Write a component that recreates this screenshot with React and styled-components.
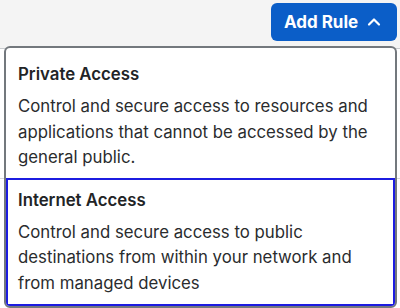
import React from "react";
import styled, { createGlobalStyle } from "styled-components";
import { ChevronUp } from "lucide-react";

const GlobalStyle = createGlobalStyle`
  * { box-sizing: border-box; }
  html, body { margin: 0; padding: 0; background: #ffffff; }
  body {
    font-family: Inter, "Noto Sans", sans-serif;
    color: #222426;
  }
`;

const options = [
  {
    title: "Private Access",
    description:
      "Control and secure access to resources and applications that cannot be accessed by the general public.",
  },
  {
    title: "Internet Access",
    description:
      "Control and secure access to public destinations from within your network and from managed devices",
    focused: true,
  },
];

const App = () => {
  return (
    <Page>
      <GlobalStyle />
      <Toolbar>
        <AddButton type="button">
          Add Rule
          <ChevronUp size={20} strokeWidth={2.6} />
        </AddButton>
      </Toolbar>
      <Row />
      <Row />
      <Menu role="menu">
        {options.map((option) => (
          <MenuItem key={option.title} focused={option.focused} role="menuitem">
            <ItemTitle>{option.title}</ItemTitle>
            <ItemDescription>{option.description}</ItemDescription>
          </MenuItem>
        ))}
      </Menu>
    </Page>
  );
};

export default App;

const Page = styled.div`
  position: relative;
  width: 400px;
  height: 308px;
  overflow: hidden;
  background: #ffffff;
`;

const Toolbar = styled.div`
  height: 49px;
  background: #f4f4f4;
  border-bottom: 1px solid #c9cccf;
  display: flex;
  justify-content: flex-end;
  align-items: flex-start;
  padding: 3px 3px 0 0;
`;

const Row = styled.div`
  height: 130px;
  border-bottom: 1px solid #d6d8da;
`;

const AddButton = styled.button`
  display: flex;
  align-items: center;
  gap: 6px;
  height: 38px;
  width: 126px;
  justify-content: center;
  padding: 0 12px;
  border: none;
  border-radius: 6px;
  background: #0b5ec8;
  color: #ffffff;
  font-family: Inter, "Noto Sans", sans-serif;
  font-size: 17px;
  font-weight: 700;
  cursor: pointer;
`;

const Menu = styled.div`
  position: absolute;
  top: 46px;
  left: 4px;
  width: 393px;
  background: #ffffff;
  border: 2px solid #73787d;
  border-radius: 6px;
  overflow: hidden;
`;

const MenuItem = styled.div`
  display: flex;
  flex-direction: column;
  gap: 8px;
  padding: ${(props) => (props.focused ? "8px 2px 8px 10px" : "14px 4px 7px 12px")};
  border: ${(props) => (props.focused ? "2px solid #1c1ce0" : "none")};
`;

const ItemTitle = styled.div`
  font-size: 16.8px;
  line-height: 24px;
  font-weight: 600;
  color: #222426;
`;

const ItemDescription = styled.div`
  font-size: 16.8px;
  line-height: 25.5px;
  font-weight: 400;
  color: #2a2c2e;
`;
